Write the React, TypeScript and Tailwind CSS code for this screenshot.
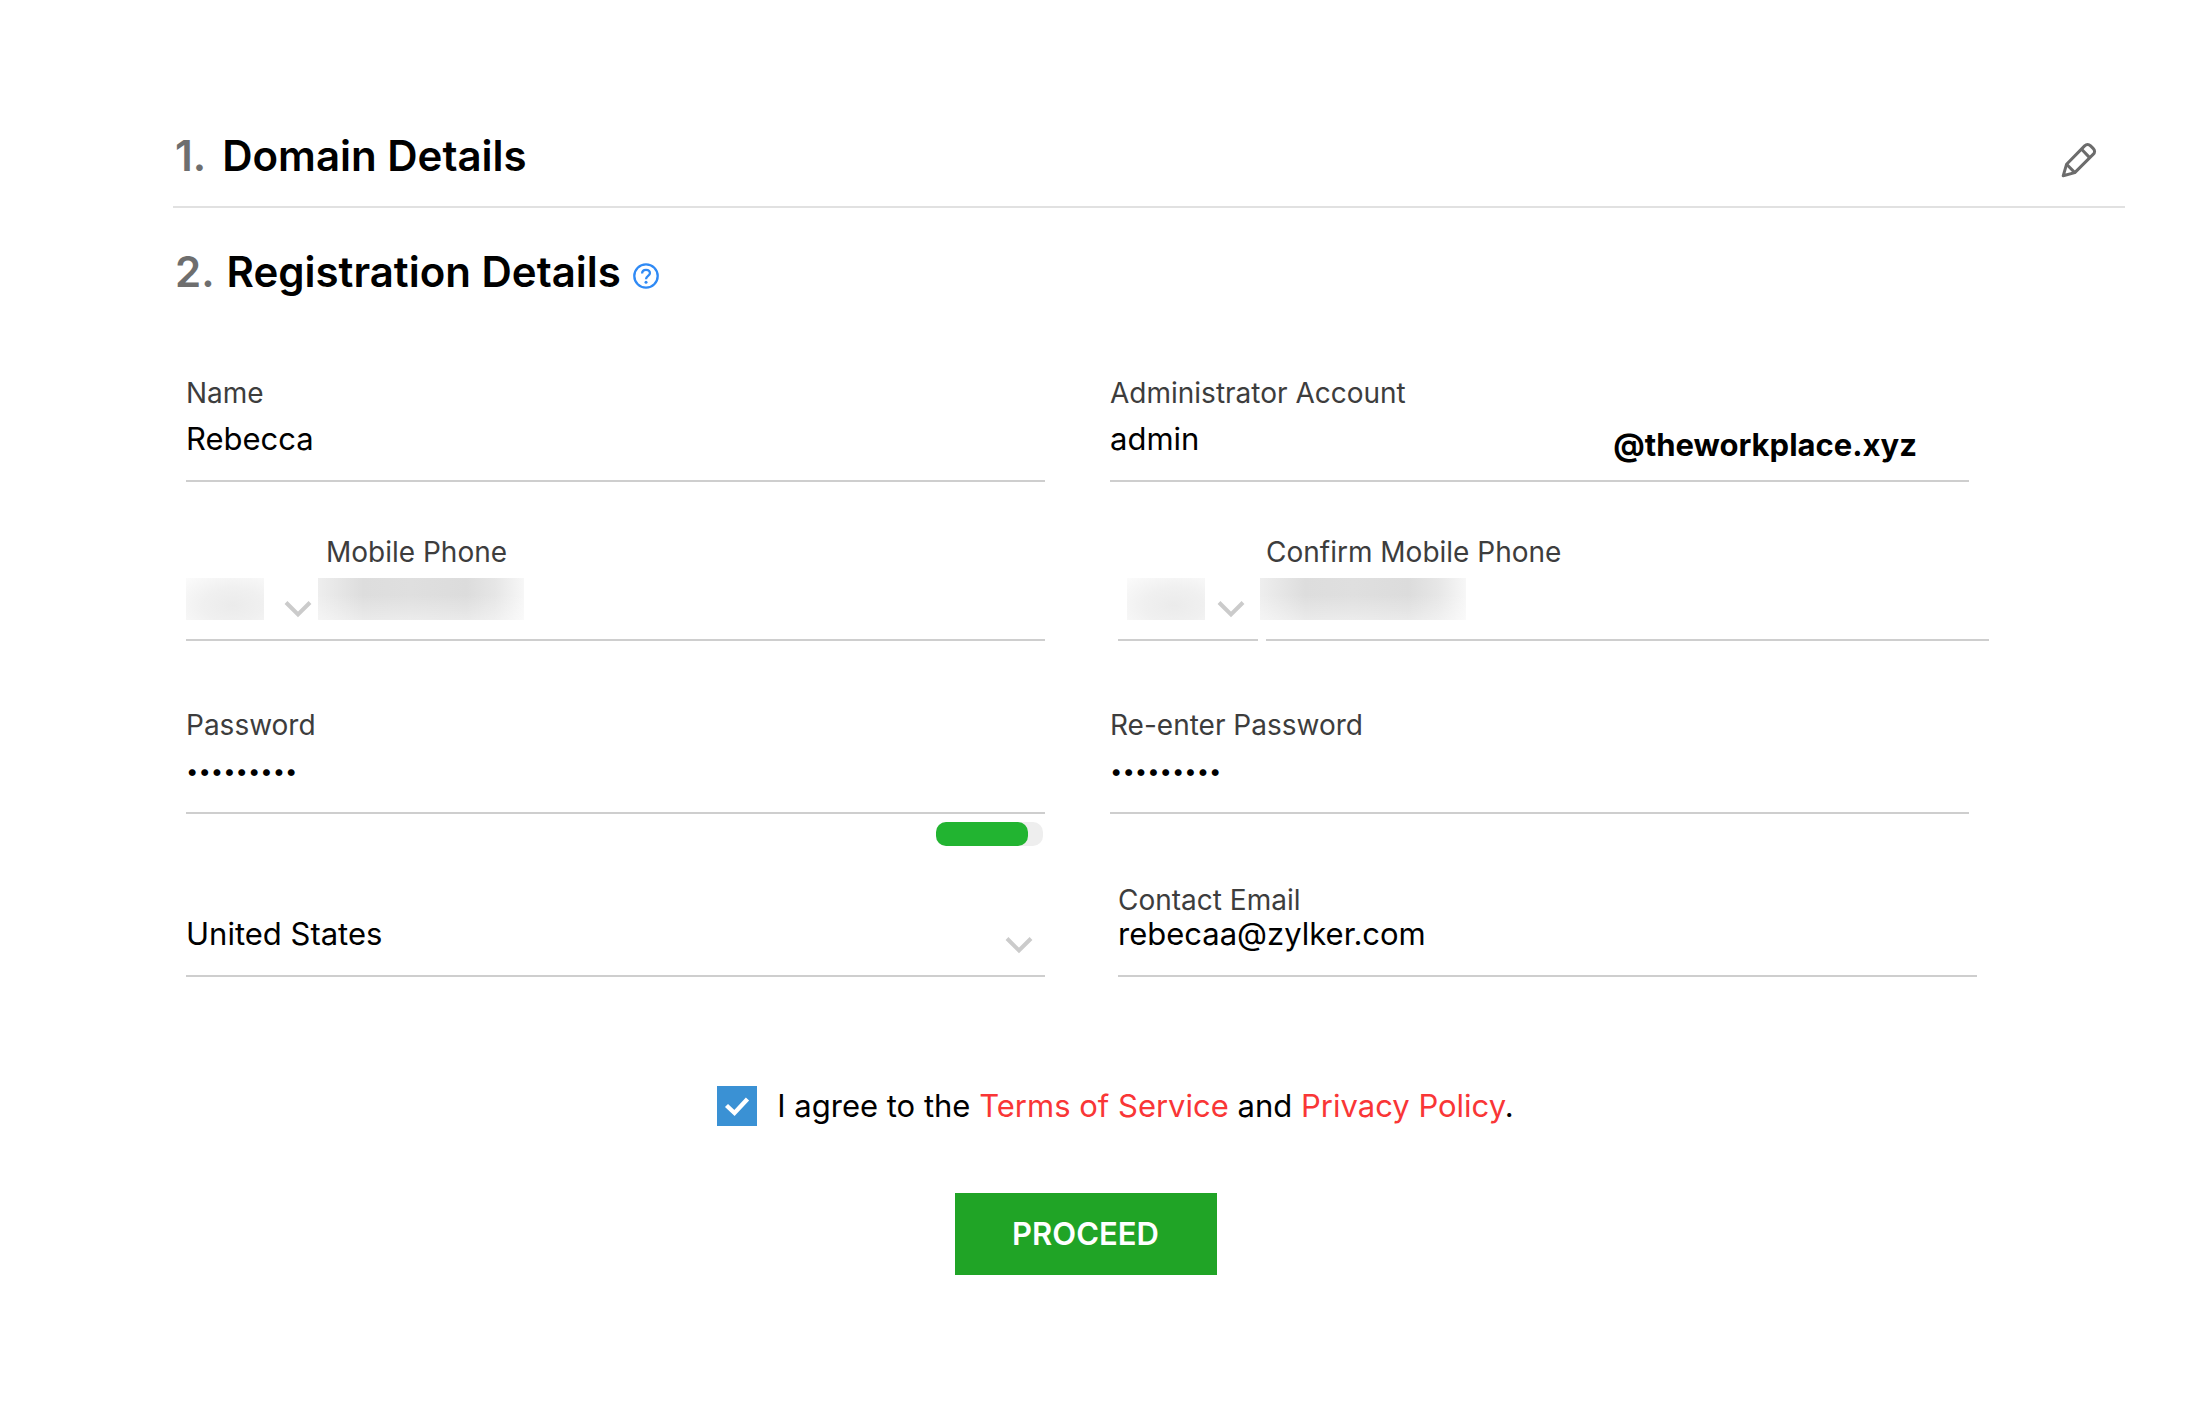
import { type ReactNode } from 'react';

const valueClass = 'block w-full min-w-0 bg-transparent leading-10 text-black outline-none';
const labelClass = 'block text-[28px] leading-9 text-[#3d3d3d]';
const lineClass = 'border-b-2 border-[#cecece]';
const headingClass = 'flex pl-0.5 text-[42px] leading-14 font-semibold';
const blurredCode = 'bg-[radial-gradient(ellipse_at_60%_65%,#ebebeb_0%,#f0f0f0_45%,#fbfbfb_100%)]';
const blurredPhone =
  'bg-[linear-gradient(to_top,#ffffff66_0%,#ffffff00_60%),linear-gradient(to_right,#eeeeee_0%,#dddddd_22%,#dfdfdf_45%,#dcdcdc_72%,#e6e6e6_86%,#f7f7f7_100%)]';

const Chevron = () => (
  <svg width="28" height="18" viewBox="0 0 28 18" fill="none" stroke="#cbcbcb" strokeWidth="4" aria-hidden="true">
    <path d="M2 2.5 14 14.5 26 2.5" />
  </svg>
);

const PencilIcon = () => (
  <svg
    width="36"
    height="36"
    viewBox="0 0 36 36"
    fill="none"
    stroke="#6c6c6c"
    strokeWidth="3"
    strokeLinejoin="round"
    aria-hidden="true"
  >
    <path d="M2.2 33.8 5.6 22.2 23.6 3.9Q26.6 .9 29.6 3.9L32.1 6.4Q35.1 9.4 32.1 12.4L13.8 30.6Z" />
    <path d="M5.6 22.2 13.8 30.6M20.6 7.2 28.6 15.6" />
  </svg>
);

const HelpIcon = () => (
  <svg width="26" height="26" viewBox="0 0 26 26" fill="none" stroke="#2f8af5" aria-hidden="true">
    <circle cx="13" cy="13" r="11.7" strokeWidth="2.3" />
    <path d="M9.1 10.6C9.1 8.2 10.7 6.8 13 6.8S16.9 8.2 16.9 10.3C16.9 12.9 13 13.1 13 16.3" strokeWidth="2.3" />
    <circle cx="13" cy="19.3" r="1.5" fill="#2f8af5" stroke="none" />
  </svg>
);

type FieldProps = {
  id: string;
  label: string;
  value: string;
  type?: string;
  compact?: boolean;
  suffix?: ReactNode;
};

const Field = ({ id, label, value, type = 'text', compact = false, suffix }: FieldProps) => (
  <div>
    <label htmlFor={id} className={labelClass}>
      {label}
    </label>
    <div className={`flex pb-[21px] ${compact ? '' : 'pt-2'} ${lineClass}`}>
      <input
        id={id}
        type={type}
        defaultValue={value}
        className={`${valueClass} ${compact ? '-mt-1' : ''} ${type === 'password' ? 'text-[22px]' : 'text-[31px]'}`}
      />
      {suffix}
    </div>
  </div>
);

export default function App() {
  return (
    <main className="min-h-screen bg-white pt-32 pr-[79px] pb-36 pl-[173px] font-['Inter','Liberation_Sans',sans-serif] text-black">
      <header className="flex items-center justify-between border-b-2 border-[#e1e1e1] pb-[22px]">
        <h2 className={`gap-4 ${headingClass}`}>
          <span className="text-[#6e6e6e]">1.</span>
          Domain Details
        </h2>
        <button type="button" aria-label="Edit domain details" className="mt-2 mr-7">
          <PencilIcon />
        </button>
      </header>

      <div className="mt-9 flex items-center gap-3">
        <h2 className={`gap-3 ${headingClass}`}>
          <span className="text-[#6e6e6e]">2.</span>
          Registration Details
        </h2>
        <button type="button" aria-label="Help" className="mt-2">
          <HelpIcon />
        </button>
      </div>

      <form className="mt-[75px] pr-[156px] pl-[13px]" onSubmit={(e) => e.preventDefault()}>
        <div className="grid grid-cols-2 gap-x-[65px]">
          <Field id="name" label="Name" value="Rebecca" />
          <Field
            id="admin"
            label="Administrator Account"
            value="admin"
            suffix={<span className="mt-3 mr-[52px] text-[31px] leading-7 font-bold">@theworkplace.xyz</span>}
          />
        </div>

        <div className="mt-[52px] grid grid-cols-2 gap-x-[65px]">
          <div className={`flex ${lineClass}`}>
            <div className="mt-11 flex w-[132px] items-start gap-5">
              <select aria-label="Country code" className={`h-[42px] w-[78px] appearance-none ${blurredCode}`} />
              <span className="mt-5.5">
                <Chevron />
              </span>
            </div>
            <div className="flex-1">
              <label htmlFor="mobile" className={`pl-2 ${labelClass}`}>
                Mobile Phone
              </label>
              <input id="mobile" type="tel" className={`mt-2 mb-[19px] block h-[42px] w-[206px] ${blurredPhone}`} />
            </div>
          </div>
          <div className="-mr-5 ml-2 flex gap-2">
            <div className={`flex w-[140px] items-start gap-3 pt-11 pl-[9px] ${lineClass}`}>
              <select
                aria-label="Country code, confirmation"
                className={`h-[42px] w-[78px] appearance-none ${blurredCode}`}
              />
              <span className="mt-5.5">
                <Chevron />
              </span>
            </div>
            <div className={`flex-1 ${lineClass}`}>
              <label htmlFor="confirm-mobile" className={labelClass}>
                Confirm Mobile Phone
              </label>
              <input
                id="confirm-mobile"
                type="tel"
                className={`mt-2 mb-[19px] -ml-1.5 block h-[42px] w-[206px] ${blurredPhone}`}
              />
            </div>
          </div>
        </div>

        <div className="mt-[66px] grid grid-cols-2 gap-x-[65px]">
          <div>
            <Field id="password" type="password" label="Password" value="rebecca12" />
            <div
              role="meter"
              aria-label="Password strength"
              aria-valuemin={0}
              aria-valuemax={100}
              aria-valuenow={86}
              className="mt-2 mr-0.5 ml-auto h-6 w-[107px] rounded-[10px] bg-[#eeeeee]"
            >
              <div className="h-full w-[86%] rounded-[10px] bg-[#22b431]" />
            </div>
          </div>
          <Field id="re-password" type="password" label="Re-enter Password" value="rebecca12" />
        </div>

        <div className="mt-9 grid grid-cols-2 items-end gap-x-[65px]">
          <div className={`flex items-end pb-[21px] ${lineClass}`}>
            <select aria-label="Country" className={`${valueClass} appearance-none text-[31px]`}>
              <option>United States</option>
            </select>
            <span className="mr-3">
              <Chevron />
            </span>
          </div>
          <div className="-mr-2 ml-2">
            <Field id="email" type="email" label="Contact Email" value="rebecaa@zylker.com" compact />
          </div>
        </div>

        <div className="mt-[109px] flex items-center justify-center gap-5 pl-[76px] text-[31px] leading-10">
          <span className="relative flex size-10">
            <input id="agree" type="checkbox" defaultChecked className="size-10 appearance-none bg-[#3a91d4]" />
            <svg
              className="pointer-events-none absolute inset-0"
              viewBox="0 0 40 40"
              fill="none"
              stroke="white"
              strokeWidth="4.4"
              aria-hidden="true"
            >
              <path d="M9.5 19.5 17.5 27 30.5 13" />
            </svg>
          </span>
          <label htmlFor="agree">
            I agree to the{' '}
            <a href="#terms" className="text-[#f93636]">
              Terms of Service
            </a>{' '}
            and{' '}
            <a href="#privacy" className="text-[#f93636]">
              Privacy Policy
            </a>
            .
          </label>
        </div>

        <div className="mt-[67px] flex justify-center pl-4">
          <button type="submit" className="h-[82px] w-[262px] bg-[#20a426] text-[31px] leading-10 font-semibold text-white">
            PROCEED
          </button>
        </div>
      </form>
    </main>
  );
}
